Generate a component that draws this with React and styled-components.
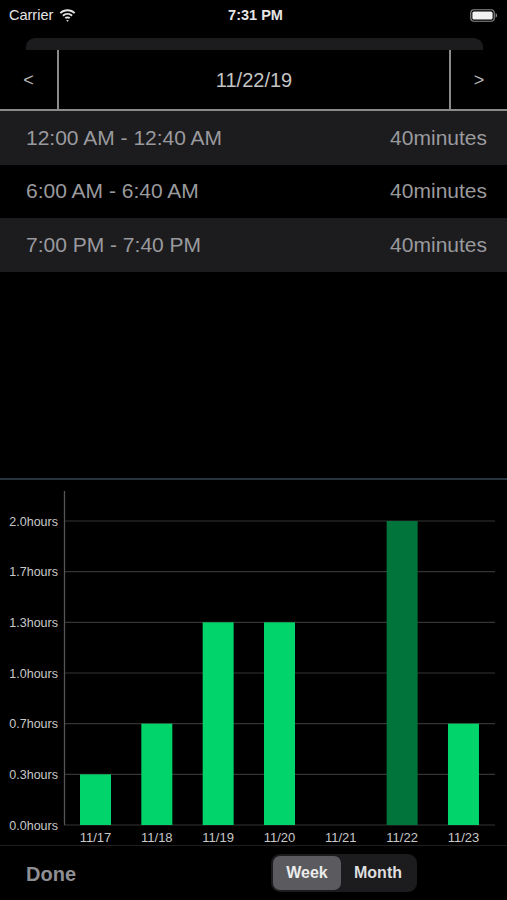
import React from "react";
import styled, { createGlobalStyle } from "styled-components";

const Global = createGlobalStyle`
  html, body { margin: 0; padding: 0; background: #000; }
  body { font-family: "Liberation Sans", Arial, sans-serif; -webkit-font-smoothing: antialiased; }
  * { box-sizing: border-box; }
`;

const Screen = styled.div`
  width: 507px;
  height: 900px;
  background: #000;
  display: flex;
  flex-direction: column;
  overflow: hidden;
`;

const StatusBar = styled.div`
  height: 30px;
  display: grid;
  grid-template-columns: 1fr auto 1fr;
  align-items: center;
  padding: 0 9px;
  color: #e6e6e6;
  font-size: 14.5px;
`;

const StatusLeft = styled.div`
  display: flex;
  align-items: center;
  gap: 6px;
  font-weight: 500;
`;

const StatusTime = styled.div`
  font-weight: 700;
  font-size: 14.5px;
  padding-left: 4px;
`;

const StatusRight = styled.div`
  display: flex;
  justify-content: flex-end;
`;

const TabStrip = styled.div`
  margin: 8px 24px 0 26px;
  height: 12px;
  background: #1c1c1e;
  border-radius: 9px 9px 0 0;
`;

const DateNav = styled.div`
  height: 61px;
  display: grid;
  grid-template-columns: 59px 1fr 58px;
  border-bottom: 2px solid #8a8a8a;
`;

const NavButton = styled.div`
  display: flex;
  align-items: center;
  justify-content: center;
  color: #b8b8b8;
  font-size: 18px;
  padding-top: 2px;
  ${(p) => (p.$side === "left" ? "border-right: 2px solid #8a8a8a;" : "border-left: 2px solid #8a8a8a;")}
`;

const DateTitle = styled.div`
  display: flex;
  align-items: center;
  justify-content: center;
  color: #c4c4c4;
  font-size: 20px;
  padding-top: 2px;
`;

const SessionList = styled.div`
  display: flex;
  flex-direction: column;
`;

const SessionRow = styled.div`
  height: 53.5px;
  display: flex;
  align-items: center;
  justify-content: space-between;
  padding: 0 20px 0 26px;
  background: ${(p) => (p.$shaded ? "#1c1c1e" : "#000")};
  color: #9a9a9e;
  font-size: 21px;
`;

const Spacer = styled.div`
  flex: 1;
`;

const ChartSection = styled.div`
  height: 367px;
  border-top: 2px solid #27343f;
`;

const Toolbar = styled.div`
  height: 55px;
  border-top: 1px solid #1e1e1e;
  display: flex;
  align-items: center;
  padding-left: 26px;
`;

const DoneButton = styled.div`
  color: #8e8e93;
  font-size: 20px;
  font-weight: 700;
  padding-top: 2px;
`;

const Segmented = styled.div`
  margin-left: auto;
  margin-right: 90px;
  width: 146px;
  height: 38px;
  background: #1c1c1e;
  border-radius: 9px;
  padding: 2px;
  display: grid;
  grid-template-columns: 68px 1fr;
`;

const Segment = styled.div`
  display: flex;
  align-items: center;
  justify-content: center;
  border-radius: 7px;
  background: ${(p) => (p.$active ? "#5b5b5f" : "transparent")};
  color: ${(p) => (p.$active ? "#ececec" : "#dedede")};
  font-size: 16px;
  font-weight: 700;
`;

const Wifi = () => (
  <svg width="17" height="13" viewBox="0 0 17 13">
    <path d="M8.5 2.2c2.5 0 4.8 1 6.5 2.6l1.3-1.4C14.2 1.4 11.5.2 8.5.2S2.8 1.4.7 3.4L2 4.8c1.7-1.6 4-2.6 6.5-2.6z" fill="#e6e6e6" />
    <path d="M8.5 5.8c1.5 0 2.9.6 3.9 1.6l1.3-1.4C12.4 4.7 10.5 3.9 8.5 3.9S4.6 4.7 3.3 6l1.3 1.4c1-1 2.4-1.6 3.9-1.6z" fill="#e6e6e6" />
    <path d="M8.5 9.3c.6 0 1.1.2 1.5.6l1.3-1.4c-.7-.7-1.7-1.1-2.8-1.1s-2.1.4-2.8 1.1L7 9.9c.4-.4.9-.6 1.5-.6z" fill="#e6e6e6" />
    <path d="M8.5 12.8l1.3-1.4c-.3-.3-.8-.5-1.3-.5s-1 .2-1.3.5z" fill="#e6e6e6" />
  </svg>
);

const Battery = () => (
  <svg width="28" height="13" viewBox="0 0 28 13">
    <rect x="0.75" y="0.75" width="23.5" height="11.5" rx="3.2" fill="none" stroke="#8a8a8a" strokeWidth="1.2" />
    <rect x="2.4" y="2.4" width="20.2" height="8.2" rx="1.6" fill="#f2f2f2" />
    <path d="M25.6 4.3c.9.3 1.5 1.2 1.5 2.2s-.6 1.9-1.5 2.2z" fill="#8a8a8a" />
  </svg>
);

const labels = ["2.0hours", "1.7hours", "1.3hours", "1.0hours", "0.7hours", "0.3hours", "0.0hours"];
const bars = [
  { d: "11/17", v: 1 / 3 },
  { d: "11/18", v: 2 / 3 },
  { d: "11/19", v: 4 / 3 },
  { d: "11/20", v: 4 / 3 },
  { d: "11/21", v: 0 },
  { d: "11/22", v: 2, sel: true },
  { d: "11/23", v: 2 / 3 },
];

const WeekChart = () => {
  const oy = 481;
  const top = 522 - oy;
  const base = 826 - oy;
  const step = (base - top) / 6;
  const perHour = (base - top) / 2;
  return (
    <svg width="507" height="365" viewBox="0 0 507 365">
      {labels.map((l, i) => {
        const y = top + i * step;
        return (
          <g key={l}>
            <line x1="64" x2="495" y1={y} y2={y} stroke="#343434" strokeWidth="1.2" />
            <text
              x="58"
              y={y + 4.5}
              textAnchor="end"
              fill="#c8c8c8"
              fontSize="12.5"
              fontFamily="Liberation Sans, Arial, sans-serif"
            >
              {l}
            </text>
          </g>
        );
      })}
      <line x1="64.5" x2="64.5" y1={492 - oy} y2={base} stroke="#555" strokeWidth="1.3" />
      {bars.map((b, i) => {
        const cx = 95.5 + i * 61.33;
        const h = b.v * perHour;
        return (
          <g key={b.d}>
            {h > 0 && (
              <rect x={cx - 15.5} y={base - h} width="31" height={h} fill={b.sel ? "#00743a" : "#00d46a"} />
            )}
            <text
              x={cx}
              y={843 - oy}
              textAnchor="middle"
              fill="#c8c8c8"
              fontSize="13"
              fontFamily="Liberation Sans, Arial, sans-serif"
            >
              {b.d}
            </text>
          </g>
        );
      })}
    </svg>
  );
};

const sessions = [
  { t: "12:00 AM - 12:40 AM", d: "40minutes" },
  { t: "6:00 AM - 6:40 AM", d: "40minutes" },
  { t: "7:00 PM - 7:40 PM", d: "40minutes" },
];

export default function App() {
  return (
    <>
      <Global />
      <Screen>
        <StatusBar>
          <StatusLeft>
            Carrier <Wifi />
          </StatusLeft>
          <StatusTime>7:31 PM</StatusTime>
          <StatusRight>
            <Battery />
          </StatusRight>
        </StatusBar>
        <TabStrip />
        <DateNav>
          <NavButton $side="left">&lt;</NavButton>
          <DateTitle>11/22/19</DateTitle>
          <NavButton $side="right">&gt;</NavButton>
        </DateNav>
        <SessionList>
          {sessions.map((s, i) => (
            <SessionRow key={i} $shaded={i % 2 === 0}>
              <span>{s.t}</span>
              <span>{s.d}</span>
            </SessionRow>
          ))}
        </SessionList>
        <Spacer />
        <ChartSection>
          <WeekChart />
        </ChartSection>
        <Toolbar>
          <DoneButton>Done</DoneButton>
          <Segmented>
            <Segment $active>Week</Segment>
            <Segment>Month</Segment>
          </Segmented>
        </Toolbar>
      </Screen>
    </>
  );
}
